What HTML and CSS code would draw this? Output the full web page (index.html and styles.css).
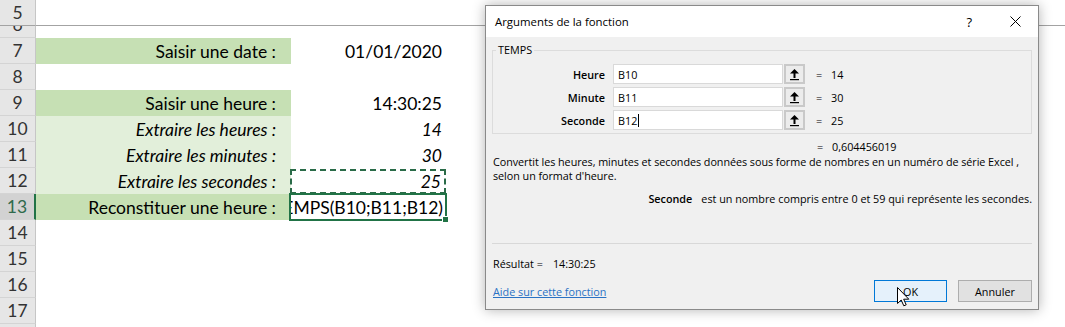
FILE: index.html
```html
<!DOCTYPE html>
<html lang="fr">
<head>
<meta charset="utf-8">
<title>TEMPS</title>
<link rel="stylesheet" href="styles.css">
</head>
<body>
<div class="page">
  <div class="sheet">
    <div class="row freeze"><div class="hdr">5</div><div class="cell b"></div><div class="cell c"></div><div class="cell"></div></div>
    <div class="row short"><div class="hdr clip">6</div><div class="cell b"></div><div class="cell c"></div><div class="cell"></div></div>
    <div class="row"><div class="hdr">7</div><div class="cell b g1">Saisir une date :</div><div class="cell c">01/01/2020</div><div class="cell"></div></div>
    <div class="row"><div class="hdr">8</div><div class="cell b"></div><div class="cell c"></div><div class="cell"></div></div>
    <div class="row"><div class="hdr">9</div><div class="cell b g1">Saisir une heure :</div><div class="cell c">14:30:25</div><div class="cell"></div></div>
    <div class="row"><div class="hdr">10</div><div class="cell b g2 it">Extraire les heures :</div><div class="cell c it">14</div><div class="cell"></div></div>
    <div class="row"><div class="hdr">11</div><div class="cell b g2 it">Extraire les minutes :</div><div class="cell c it">30</div><div class="cell"></div></div>
    <div class="row"><div class="hdr">12</div><div class="cell b g2 it">Extraire les secondes :</div><div class="cell c it marquee">25</div><div class="cell"></div></div>
    <div class="row"><div class="hdr sel">13</div><div class="cell b g1">Reconstituer une heure :</div><div class="cell c active"><span class="clipbox"><span class="ftext">=TEMPS(B10;B11;B12)</span></span></div><div class="cell"></div></div>
    <div class="row"><div class="hdr">14</div><div class="cell b"></div><div class="cell c"></div><div class="cell"></div></div>
    <div class="row"><div class="hdr">15</div><div class="cell b"></div><div class="cell c"></div><div class="cell"></div></div>
    <div class="row"><div class="hdr">16</div><div class="cell b"></div><div class="cell c"></div><div class="cell"></div></div>
    <div class="row"><div class="hdr">17</div><div class="cell b"></div><div class="cell c"></div><div class="cell"></div></div>
    <div class="row"><div class="hdr">18</div><div class="cell b"></div><div class="cell c"></div><div class="cell"></div></div>
  </div>

  <div class="dlg">
    <div class="tbar">
      <span class="title">Arguments de la fonction</span>
      <span class="help">?</span>
      <svg class="close" width="11" height="11" viewBox="0 0 11 11"><path d="M0.5 0.5 L10.5 10.5 M10.5 0.5 L0.5 10.5" stroke="#000" stroke-width="1" fill="none"/></svg>
    </div>
    <div class="body">
      <div class="group">
        <span class="legend">TEMPS</span>
        <div class="args">
          <div class="arg">
            <span class="lbl">Heure</span>
            <span class="inp">B10</span>
            <span class="ref"><svg width="17" height="16" viewBox="0 0 17 16"><path d="M4 7.5 L8.5 3 L13 7.5 Z" fill="#000"/><rect x="7.5" y="6" width="2" height="6" fill="#000"/><rect x="4" y="13" width="9" height="1.2" fill="#000"/></svg></span>
            <span class="eq">=</span><span class="val">14</span>
          </div>
          <div class="arg">
            <span class="lbl">Minute</span>
            <span class="inp">B11</span>
            <span class="ref"><svg width="17" height="16" viewBox="0 0 17 16"><path d="M4 7.5 L8.5 3 L13 7.5 Z" fill="#000"/><rect x="7.5" y="6" width="2" height="6" fill="#000"/><rect x="4" y="13" width="9" height="1.2" fill="#000"/></svg></span>
            <span class="eq">=</span><span class="val">30</span>
          </div>
          <div class="arg">
            <span class="lbl">Seconde</span>
            <span class="inp">B12<i class="caret"></i></span>
            <span class="ref"><svg width="17" height="16" viewBox="0 0 17 16"><path d="M4 7.5 L8.5 3 L13 7.5 Z" fill="#000"/><rect x="7.5" y="6" width="2" height="6" fill="#000"/><rect x="4" y="13" width="9" height="1.2" fill="#000"/></svg></span>
            <span class="eq">=</span><span class="val">25</span>
          </div>
        </div>
      </div>
      <div class="total"><span class="eq">=</span><span class="val">0,604456019</span></div>
      <p class="desc"><span class="line">Convertit les heures, minutes et secondes données sous forme de nombres en un numéro de série Excel ,</span><span class="line">selon un format d'heure.</span></p>
      <p class="pdesc"><b>Seconde</b>est un nombre compris entre 0 et 59 qui représente les secondes.</p>
      <div class="sep"></div>
      <div class="result">Résultat =<span class="rv">14:30:25</span></div>
      <div class="footer">
        <a class="link" href="#">Aide sur cette fonction</a>
        <span class="btn ok">OK</span>
        <span class="btn cancel">Annuler</span>
      </div>
    </div>
  </div>

  <svg class="cursor" width="13" height="20" viewBox="0 0 13 20"><path d="M0.5 0.5 L0.5 16.5 L4.2 13 L6.8 18.8 L9.2 17.8 L6.7 12.2 L11.8 12.2 Z" fill="#fff" stroke="#000" stroke-width="1" stroke-linejoin="round"/></svg>
</div>
</body>
</html>
```
FILE: styles.css
```css
body {
  margin: 0;
  background: #fff;
}

.page {
  position: relative;
  width: 1065px;
  height: 327px;
  overflow: hidden;
  font-family: Lato, "Liberation Sans", sans-serif;
  color: #000;
}

.sheet {
  display: flex;
  flex-direction: column;
}

.row {
  display: grid;
  grid-template-columns: 36px 255px 156px 1fr;
  height: 26px;
}

.row.short {
  height: 12px;
}

.hdr {
  box-sizing: border-box;
  background: #e6e6e6;
  border-right: 1px solid #c6c6c6;
  border-bottom: 1px solid #d4d4d4;
  text-align: center;
  font-size: 17.5px;
  line-height: 25px;
  color: #333;
}

.hdr.clip {
  display: flex;
  flex-direction: column;
  justify-content: flex-end;
  overflow: hidden;
}

.hdr.sel {
  background: #d2d2d2;
  color: #2f6a4c;
  border-right: 2px solid #217346;
}

.row.freeze > * {
  border-bottom: 1px solid #a3a3a3;
  box-sizing: border-box;
}

.cell {
  display: flex;
  align-items: center;
  justify-content: flex-end;
  overflow: hidden;
  white-space: nowrap;
  font-size: 17.5px;
  box-sizing: border-box;
}

.b {
  padding-right: 15px;
}

.c {
  padding-right: 5px;
}

.g1 {
  background: #c6e0b4;
}

.g2 {
  background: #e2efda;
}

.it {
  font-style: italic;
}

.marquee {
  border: 2px dashed #2a6b48;
  margin: 1px 1px 0 -1px;
  padding-right: 3px;
}

.active {
  position: relative;
  overflow: visible;
  border: 2px solid #217346;
  margin: -1px 0 -1px -2px;
  padding-right: 2px;
  z-index: 1;
}

.clipbox {
  display: flex;
  justify-content: flex-end;
  width: 100%;
  overflow: hidden;
}

.ftext {
  flex-shrink: 0;
}

.active::after {
  content: "";
  position: absolute;
  right: -4px;
  bottom: -4px;
  width: 5px;
  height: 5px;
  background: #217346;
  border: 1px solid #fff;
}

/* dialog */
.dlg {
  position: absolute;
  left: 485px;
  top: 5px;
  width: 554px;
  height: 305px;
  box-sizing: border-box;
  border: 1px solid #8a8a8a;
  background: #f0f0f0;
  box-shadow: 0 0 12px rgba(0, 0, 0, 0.3);
  display: flex;
  flex-direction: column;
  font-family: "Open Sans", "Noto Sans", sans-serif;
  font-size: 10.8px;
  color: #000;
  z-index: 2;
}

.tbar {
  flex-shrink: 0;
  height: 31px;
  background: #fff;
  display: flex;
  align-items: center;
  padding-left: 9px;
}

.title {
  font-size: 11.4px;
}

.help {
  margin-left: auto;
  font-size: 13px;
  margin-right: 38px;
}

.close {
  margin-right: 17px;
}

.body {
  flex: 1;
  display: flex;
  flex-direction: column;
  padding: 0 6px;
  min-height: 0;
}

.group {
  margin-top: 13px;
  border: 1px solid #dcdcdc;
  padding-bottom: 3px;
  display: flex;
  flex-direction: column;
}

.legend {
  align-self: flex-start;
  margin: -8px 0 0 3px;
  padding: 0 2px;
  height: 14px;
  line-height: 14px;
  background: #f0f0f0;
}

.args {
  display: flex;
  flex-direction: column;
  gap: 3px;
  margin-top: 7px;
}

.arg {
  display: flex;
  align-items: center;
  height: 20px;
}

.lbl {
  width: 112px;
  text-align: right;
  font-weight: 600;
  margin-right: 8px;
}

.inp {
  box-sizing: border-box;
  width: 170px;
  height: 20px;
  background: #fff;
  border: 1px solid #d9d9d9;
  padding-left: 4px;
  display: flex;
  align-items: center;
}

.caret {
  display: inline-block;
  width: 1px;
  height: 13px;
  background: #000;
  margin-left: 1px;
}

.ref {
  box-sizing: border-box;
  width: 21px;
  height: 20px;
  margin-left: 1px;
  border: 2px solid #c9c9c9;
  background: #ececec;
  display: flex;
  align-items: center;
  justify-content: center;
}

.arg .eq {
  margin-left: 11px;
}

.eq {
  width: 6px;
}

.val {
  margin-left: 9px;
}

.total {
  margin-top: 6px;
  height: 14px;
  line-height: 14px;
  padding-left: 325px;
  display: flex;
}

.desc {
  margin: 1px 0 0 1px;
  line-height: 14px;
  display: flex;
  flex-direction: column;
  white-space: nowrap;
  letter-spacing: -0.05px;
}

.pdesc {
  margin: 9px 0 0;
  line-height: 14px;
  text-align: right;
  white-space: nowrap;
}

.pdesc b {
  font-weight: 600;
  margin-right: 9px;
}

.sep {
  margin-top: 37px;
  height: 1px;
  flex-shrink: 0;
  background: #d8d8d8;
}

.result {
  margin: 13px 0 0 1px;
  line-height: 14px;
}

.rv {
  margin-left: 10px;
}

.footer {
  margin-top: 9px;
  display: flex;
  align-items: center;
  height: 22px;
  flex-shrink: 0;
}

.link {
  margin-left: 1px;
  color: #2a72c4;
  text-decoration: underline;
}

.btn {
  box-sizing: border-box;
  height: 22px;
  display: flex;
  align-items: center;
  justify-content: center;
  border: 1px solid #adadad;
  background: #e1e1e1;
}

.ok {
  margin-left: auto;
  width: 73px;
  border-color: #0078d7;
  background: #e5f1fb;
}

.cancel {
  margin-left: 11px;
  width: 74px;
}

.cursor {
  position: absolute;
  left: 897px;
  top: 287px;
  z-index: 3;
}
```
